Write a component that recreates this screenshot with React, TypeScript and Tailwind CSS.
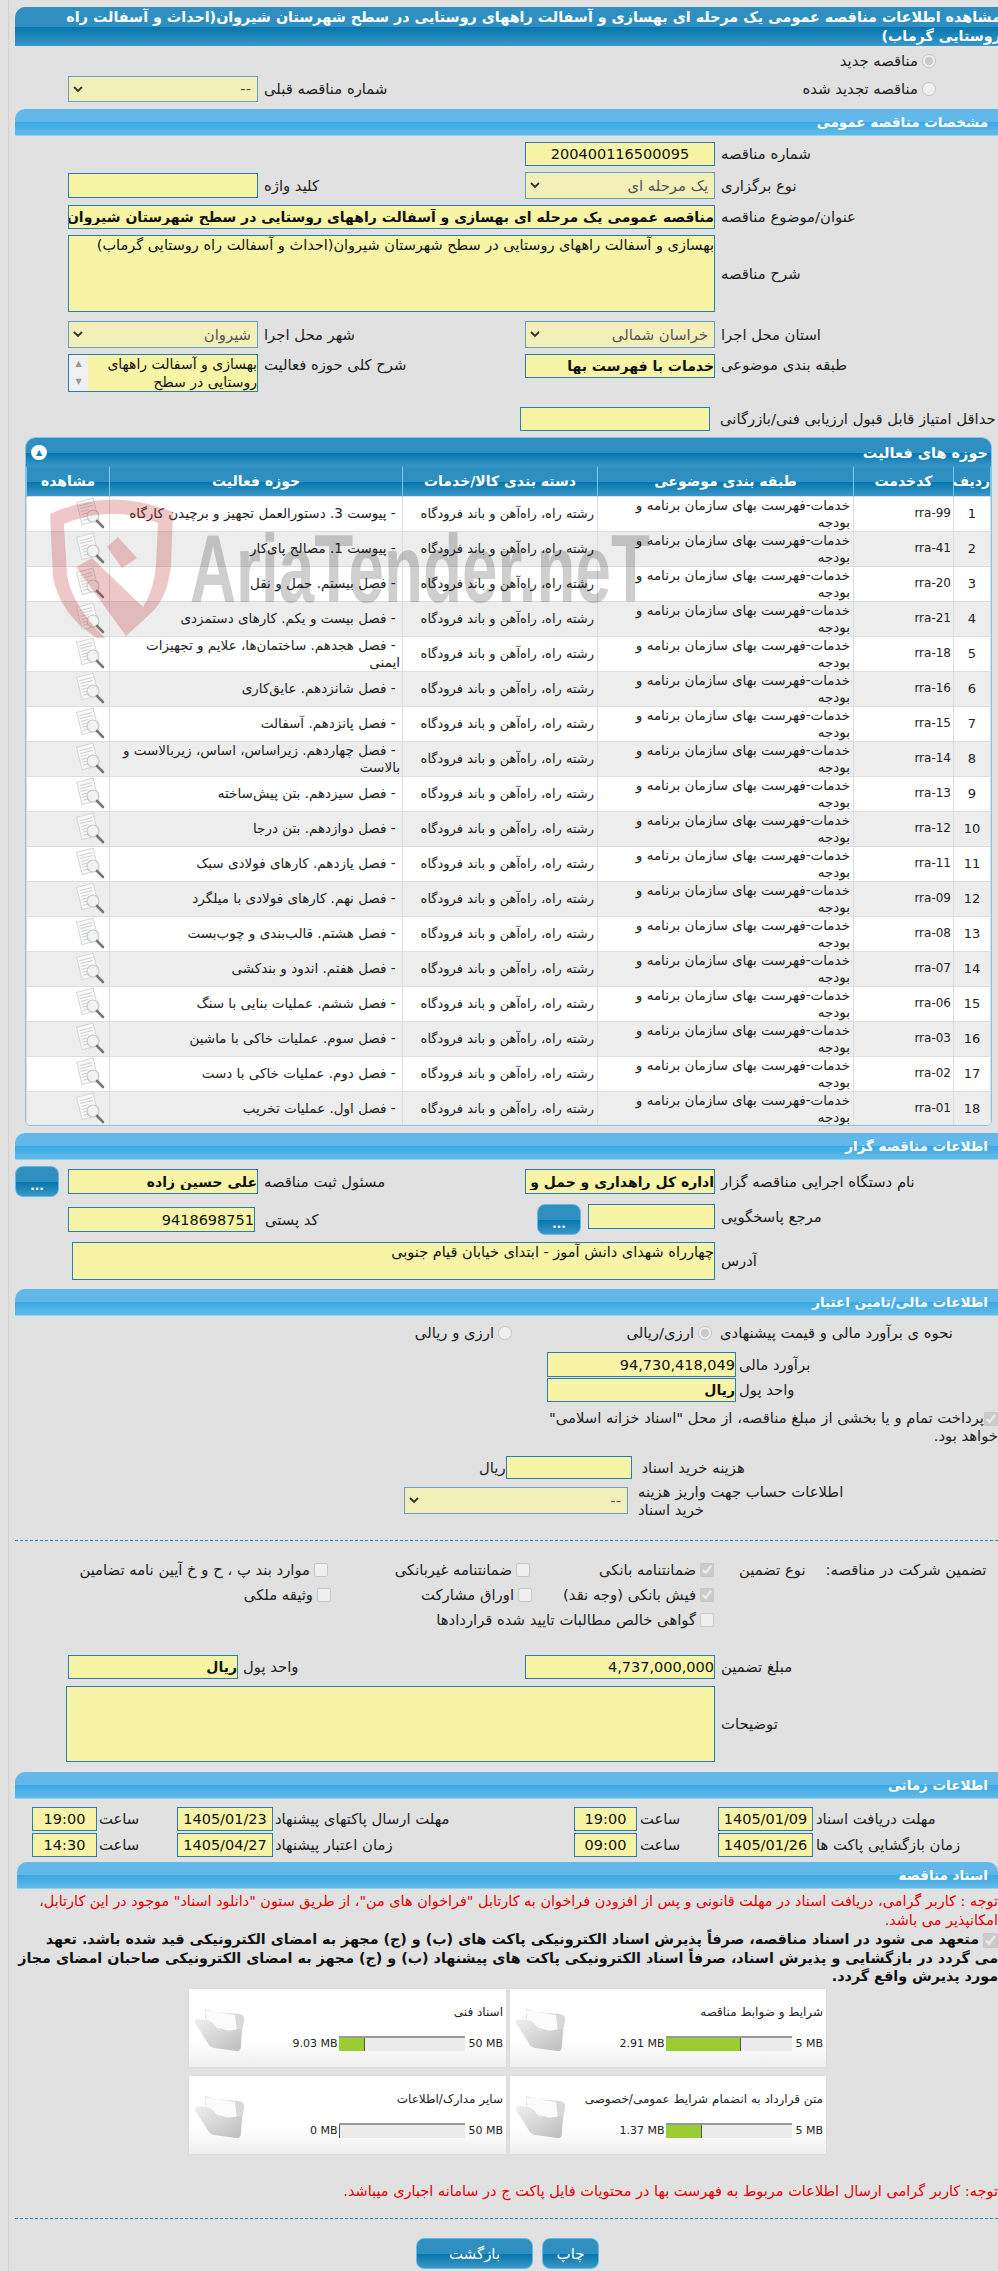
import type { ReactNode } from "react";
import { twMerge } from "tailwind-merge";

const darkBar =
  "bg-[linear-gradient(#2f8fc0_0%,#2f8fc0_50%,#0775ad_52%,#3a98c8_100%)]";
const inputBase =
  "block bg-[#f7f5a5] border border-[#2a7cb5] text-[#111] outline-none";

const rows = [
  ["rra-99", "پیوست 3. دستورالعمل تجهیز و برچیدن کارگاه"],
  ["rra-41", "پیوست 1. مصالح پای‌کار"],
  ["rra-20", "فصل بیستم. حمل و نقل"],
  ["rra-21", "فصل بیست و یکم. کارهای دستمزدی"],
  ["rra-18", "فصل هجدهم. ساختمان‌ها، علایم و تجهیزات\nایمنی"],
  ["rra-16", "فصل شانزدهم. عایق‌کاری"],
  ["rra-15", "فصل پانزدهم. آسفالت"],
  ["rra-14", "فصل چهاردهم. زیراساس، اساس، زیربالاست و\nبالاست"],
  ["rra-13", "فصل سیزدهم. بتن پیش‌ساخته"],
  ["rra-12", "فصل دوازدهم. بتن درجا"],
  ["rra-11", "فصل یازدهم. کارهای فولادی سبک"],
  ["rra-09", "فصل نهم. کارهای فولادی با میلگرد"],
  ["rra-08", "فصل هشتم. قالب‌بندی و چوب‌بست"],
  ["rra-07", "فصل هفتم. اندود و بندکشی"],
  ["rra-06", "فصل ششم. عملیات بنایی با سنگ"],
  ["rra-03", "فصل سوم. عملیات خاکی با ماشین"],
  ["rra-02", "فصل دوم. عملیات خاکی با دست"],
  ["rra-01", "فصل اول. عملیات تخریب"],
];

const Section = ({ title, className }: { title: string; className: string }) => (
  <div
    dir="rtl"
    className={`h-[27px] rounded-tl-[10px] border-b border-[#8ed4f2] bg-[linear-gradient(#62b8e8_0%,#62b8e8_48%,#3aa8e2_50%,#62bbe9_100%)] pr-[10px] text-[13.5px] leading-[26px] font-bold text-white ${className}`}
  >
    {title}
  </div>
);

const Label = ({ children, className = "" }: { children: ReactNode; className?: string }) => (
  <span dir="rtl" className={twMerge("ml-[6px] whitespace-nowrap text-left text-[#222]", className)}>
    {children}
  </span>
);

const Field = ({
  value = "",
  className,
  bold,
  center,
}: {
  value?: string;
  className: string;
  bold?: boolean;
  center?: boolean;
}) => (
  <input
    readOnly
    dir="rtl"
    value={value}
    className={`${inputBase} ${bold ? "text-[14px] font-bold" : "text-[14.5px]"} ${center ? "text-center" : ""} ${className}`}
  />
);

const Drop = ({ value, className }: { value: string; className: string }) => (
  <div className={`relative shrink-0 ${className}`}>
    <select
      disabled
      dir="rtl"
      className="block h-full w-full appearance-none border border-[#6a9fc5] bg-[#f2f0b8] pr-[6px] text-[14.8px] text-[#555] opacity-100"
    >
      <option>{value}</option>
    </select>
    <svg width="10" height="7" viewBox="0 0 10 7" className="absolute left-[5px] top-[10px]">
      <path d="M1 1l4 4 4-4" fill="none" stroke="#333" strokeWidth="1.8" />
    </svg>
  </div>
);

const Row = ({
  left,
  right,
  className,
}: {
  left?: ReactNode;
  right?: ReactNode;
  className: string;
}) => (
  <div className={`grid grid-cols-[510px_1fr] ${className}`}>
    <div className="flex items-center pl-[53px]">{left}</div>
    <div className="flex items-center">{right}</div>
  </div>
);

const Tick = ({
  label,
  checked,
  type = "checkbox",
  className,
}: {
  label: string;
  checked?: boolean;
  type?: string;
  className: string;
}) => (
  <label dir="rtl" className={`flex items-center gap-[4px] whitespace-nowrap text-[#222] ${className}`}>
    <input type={type} disabled defaultChecked={checked} className="m-0 h-[14px] w-[14px] shrink-0" />
    {label}
  </label>
);

const DotButton = ({ className }: { className: string }) => (
  <button
    className={`block shrink-0 rounded-[8px] border border-[#62bce6] ${darkBar} pt-[8px] text-[12px] font-bold text-white ${className}`}
  >
    ...
  </button>
);

const DocIcon = () => (
  <svg width="30" height="34" viewBox="0 0 30 34" className="ml-auto mr-[3px]">
    <g transform="rotate(-14 11 14)">
      <rect x="3" y="3" width="17" height="23" fill="#f9f9f9" stroke="#d6d6d6" />
      <path d="M5 7h13M5 10h13M5 13h8M5 16h6M5 19h6M5 22h9" stroke="#d2d2d2" strokeWidth="1" />
    </g>
    <circle cx="17" cy="19" r="6" fill="#eef2f2" fillOpacity="0.8" stroke="#cacaca" strokeWidth="1.2" />
    <path d="M21 24l6 6" stroke="#777" strokeWidth="2.6" strokeLinecap="round" />
  </svg>
);

const FolderIcon = () => (
  <svg width="54" height="46" viewBox="0 0 54 46" className="shrink-0">
    <defs>
      <linearGradient id="fold" x1="0" y1="0" x2="1" y2="1">
        <stop offset="0" stopColor="#efefef" />
        <stop offset="1" stopColor="#bdbdbd" />
      </linearGradient>
    </defs>
    <path d="M12 3l10 3 24 2q6 1 5 7l-4 22q-1 3-3 1L12 12z" fill="#d8d8d8" />
    <path d="M12 4l30 5 2 18-30-8z" fill="#fbfbfb" />
    <path d="M2 17q-1-3 3-4l9 1q5 1 9 7l3 3q2 2 8 1l12-2 3 0-1 16q0 7-5 6l-22-3q-5-1-7-6z" fill="url(#fold)" />
  </svg>
);

const Card = ({
  title,
  used,
  max,
  fill,
}: {
  title: string;
  used: string;
  max: string;
  fill: string;
}) => (
  <div className="flex h-[78px] gap-[2px] bg-[linear-gradient(#fff_0%,#fff_65%,#efefef_100%)] pl-[4px] pr-[3px] shadow-[0_0_2px_#d0d0d0]">
    <div className="pt-[17px]">
      <FolderIcon />
    </div>
    <div className="flex flex-1 flex-col">
      <div dir="rtl" className="mt-[14px] h-[18px] text-[12px] leading-[18px] text-[#222]">
        {title}
      </div>
      <div className="mt-[15px] flex items-center justify-end text-[11px] leading-[15px] text-[#222]">
        <span className="mr-[2px]">{used}</span>
        <div className="h-[15px] w-[126px] border-t-2 border-[#999] bg-[#ececec]">
          <div className={`h-full border-r border-[#555] bg-[#9acd32] ${fill}`} />
        </div>
        <span className="ml-[3px]">{max}</span>
      </div>
    </div>
  </div>
);

const Watermark = () => (
  <svg
    width="640"
    height="160"
    viewBox="0 0 640 160"
    className="pointer-events-none absolute left-[40px] top-[490px]"
  >
    <path
      fillRule="evenodd"
      d="M10 24Q70 -4 133 22L131 75Q128 108 110 124L86 146 36 77 52 68 103 117Q114 100 116 75L118 33Q70 14 24 34L27 85Q32 115 65 148L57 148Q20 125 13 87z"
      fill="#c23b3b"
      fillOpacity="0.28"
    />
    <path d="M78 47L97 68 82 78 67 57z" fill="#c23b3b" fillOpacity="0.28" />
    <text
      x="150"
      y="112"
      fontFamily="Liberation Sans"
      fontWeight="700"
      fontSize="96"
      textLength="460"
      lengthAdjust="spacingAndGlyphs"
      fill="#000"
      fillOpacity="0.19"
    >
      AriaTender.neT
    </text>
  </svg>
);

export default function App() {
  return (
    <div className="relative flex h-[2271px] w-[998px] overflow-hidden bg-[#e1e1e1] font-['DejaVu_Sans',sans-serif] text-[14.8px] leading-[18px]">
      <div className="w-[9px] shrink-0 border-r border-[#d0d0d0]" />
      <main className="ml-[6px] w-[983px] shrink-0 pt-[7px]">
        {/* page title */}
        <div className={`h-[39px] rounded-tl-[10px] ${darkBar} overflow-hidden`}>
          <div
            dir="rtl"
            className="-mr-[3px] whitespace-nowrap pt-[1px] text-[14.3px] leading-[18.5px] font-bold text-white"
          >
            مشاهده اطلاعات مناقصه عمومی یک مرحله ای بهسازی و آسفالت راههای روستایی در سطح شهرستان شیروان(احداث و آسفالت راه
            <br />
            روستایی گرماب)
          </div>
        </div>

        <Row
          className="h-[30px]"
          right={<Tick type="radio" checked label="مناقصه جدید" className="ml-[184px] w-[227px]" />}
        />
        <Row
          className="h-[26px]"
          left={
            <>
              <Drop value="--" className="h-[26px] w-[190px]" />
              <Label>شماره مناقصه قبلی</Label>
            </>
          }
          right={<Tick type="radio" label="مناقصه تجدید شده" className="ml-[184px] w-[227px]" />}
        />

        <Section title="مشخصات مناقصه عمومی" className="mt-[7px]" />

        <Row
          className="mt-[6px] h-[24px]"
          right={
            <>
              <Field value="200400116500095" center className="h-[24px] w-[190px]" />
              <Label>شماره مناقصه</Label>
            </>
          }
        />
        <Row
          className="mt-[6px] h-[27px]"
          left={
            <>
              <Field className="h-[25px] w-[190px]" />
              <Label>کلید واژه</Label>
            </>
          }
          right={
            <>
              <Drop value="یک مرحله ای" className="h-[27px] w-[190px]" />
              <Label>نوع برگزاری</Label>
            </>
          }
        />
        <div className="mt-[6px] flex h-[24px] items-center pl-[53px]">
          <Field
            bold
            value="مناقصه عمومی یک مرحله ای بهسازی و آسفالت راههای روستایی در سطح شهرستان شیروان(احداث و آسفالت راه روستایی گرماب)"
            className="h-[24px] w-[647px]"
          />
          <Label>عنوان/موضوع مناقصه</Label>
        </div>
        <div className="mt-[6px] flex h-[77px] items-center pl-[53px]">
          <textarea
            readOnly
            dir="rtl"
            value="بهسازی و آسفالت راههای روستایی در سطح شهرستان شیروان(احداث و آسفالت راه روستایی گرماب)"
            className={`${inputBase} h-[77px] w-[647px] resize-none text-[14.5px]`}
          />
          <Label>شرح مناقصه</Label>
        </div>
        <Row
          className="mt-[9px] h-[27px]"
          left={
            <>
              <Drop value="شیروان" className="h-[27px] w-[190px]" />
              <Label>شهر محل اجرا</Label>
            </>
          }
          right={
            <>
              <Drop value="خراسان شمالی" className="h-[27px] w-[190px]" />
              <Label>استان محل اجرا</Label>
            </>
          }
        />
        <div className="mt-[6px] grid h-[38px] grid-cols-[510px_1fr]">
          <div className="flex items-start pl-[53px]">
            <div className="flex h-[38px] w-[190px] border border-[#2a7cb5] bg-[#f7f5a5]">
              <div className="flex w-[19px] shrink-0 flex-col items-center justify-between bg-[#f0f0f0] py-[3px] text-[8px] leading-[12px] text-[#999]">
                <span>▲</span>
                <span>▼</span>
              </div>
              <div dir="rtl" className="flex-1 text-[14px] leading-[18px] text-[#111]">
                بهسازی و آسفالت راههای
                <br />
                روستایی در سطح
              </div>
            </div>
            <Label className="leading-[22px]">شرح کلی حوزه فعالیت</Label>
          </div>
          <div className="flex items-start">
            <Field bold value="خدمات با فهرست بها" className="h-[24px] w-[190px]" />
            <Label className="leading-[22px]">طبقه بندی موضوعی</Label>
          </div>
        </div>
        <div className="mt-[15px] flex h-[24px] items-center pl-[505px]">
          <Field className="h-[24px] w-[190px]" />
          <Label className="ml-[10px]">حداقل امتیاز قابل قبول ارزیابی فنی/بازرگانی</Label>
        </div>

        {/* activity table */}
        <div className="ml-[10px] mt-[6px] h-[689px] w-[967px] overflow-hidden rounded-t-[10px] rounded-b-[6px] border border-[#8ac4e4]">
          <div className={`relative flex h-[29px] items-center justify-between pl-[5px] pr-[3px] ${darkBar}`}>
            <span className="flex h-[15px] w-[16px] items-center justify-center rounded-full bg-white text-[8px] text-[#1c80b4]">
              ▲
            </span>
            <span dir="rtl" className="text-[14.5px] font-bold text-white">
              حوزه های فعالیت
            </span>
          </div>
          <table dir="rtl" className="w-full table-fixed border-collapse bg-white text-[13.5px] leading-[17px] text-[#222]">
            <colgroup>
              <col className="w-[37px]" />
              <col className="w-[100px]" />
              <col className="w-[256px]" />
              <col className="w-[195px]" />
              <col className="w-[293px]" />
              <col />
            </colgroup>
            <thead>
              <tr className={`h-[29px] ${darkBar} text-[14px] font-bold text-white`}>
                {["ردیف", "کدخدمت", "طبقه بندی موضوعی", "دسته بندی کالا/خدمات", "حوزه فعالیت", "مشاهده"].map((h) => (
                  <th key={h} className="border-x border-[#7cc4ea] p-0 text-center font-bold">
                    {h}
                  </th>
                ))}
              </tr>
            </thead>
            <tbody>
              {rows.map((r, i) => (
                <tr key={r[0]} className={`h-[35px] ${i % 2 ? "bg-[#ededed]" : "bg-white"}`}>
                  <td className="border border-[#dcdcdc] p-0 text-center text-[13px]">{i + 1}</td>
                  <td className="border border-[#dcdcdc] p-0 pr-[2px] text-right text-[12px]">
                    <span dir="ltr">{r[0]}</span>
                  </td>
                  <td className="border border-[#dcdcdc] p-0 pr-[3px]">
                    خدمات-فهرست بهای سازمان برنامه و
                    <br />
                    بودجه
                  </td>
                  <td className="border border-[#dcdcdc] p-0 pr-[3px] text-[13px]">رشته راه، راه‌آهن و باند فرودگاه</td>
                  <td className="border border-[#dcdcdc] p-0 pr-[2px] whitespace-pre-line">
                    {"\u00a0- " + r[1]}
                  </td>
                  <td className="border border-[#dcdcdc] p-0">
                    <DocIcon />
                  </td>
                </tr>
              ))}
            </tbody>
          </table>
        </div>

        <Section title="اطلاعات مناقصه گزار" className="mt-[7px]" />

        <div className="mt-[6px] grid h-[31px] grid-cols-[510px_1fr]">
          <div className="flex items-center">
            <DotButton className="h-[31px] w-[44px]" />
            <Field bold value="علی حسین زاده" className="ml-[9px] h-[25px] w-[190px]" />
            <Label>مسئول ثبت مناقصه</Label>
          </div>
          <div className="flex items-center">
            <Field bold value="اداره کل راهداری و حمل و نقل جاده ای خراسان شمالی" className="h-[25px] w-[190px]" />
            <Label>نام دستگاه اجرایی مناقصه گزار</Label>
          </div>
        </div>
        <div className="mt-[7px] grid h-[31px] grid-cols-[510px_1fr]">
          <div className="flex items-center pl-[53px]">
            <Field value="9418698751" className="h-[25px] w-[187px]" />
            <Label className="ml-[10px]">کد پستی</Label>
          </div>
          <div className="flex items-start pl-[12px]">
            <DotButton className="h-[31px] w-[44px]" />
            <Field className="ml-[7px] h-[25px] w-[127px]" />
            <Label className="leading-[26px]">مرجع پاسخگویی</Label>
          </div>
        </div>
        <div className="mt-[7px] flex h-[38px] items-center pl-[57px]">
          <textarea
            readOnly
            dir="rtl"
            value="چهارراه شهدای دانش آموز - ابتدای خیابان قیام جنوبی"
            className={`${inputBase} h-[38px] w-[643px] resize-none text-[14.5px]`}
          />
          <Label>آدرس</Label>
        </div>

        <Section title="اطلاعات مالی/تامین اعتبار" className="mt-[9px]" />

        <div className="mt-[4px] flex h-[25px] items-center pl-[385px]">
          <Tick type="radio" label="ارزی و ریالی" className="w-[112px]" />
          <Tick type="radio" checked label="ارزی/ریالی" className="ml-[88px] w-[112px]" />
          <Label className="ml-[8px]">نحوه ی برآورد مالی و قیمت پیشنهادی</Label>
        </div>
        <div className="mt-[7px] flex h-[25px] items-center pl-[532px]">
          <Field value="94,730,418,049" className="h-[25px] w-[189px]" />
          <Label className="ml-[3px]">برآورد مالی</Label>
        </div>
        <div className="mt-[1px] flex h-[24px] items-center pl-[532px]">
          <Field bold value="ریال" className="h-[24px] w-[189px]" />
          <Label className="ml-[3px]">واحد پول</Label>
        </div>
        <div dir="rtl" className="mt-[7px] h-[40px] whitespace-nowrap text-[#222]">
          <input type="checkbox" disabled defaultChecked className="m-0 h-[14px] w-[14px] align-middle" />
          پرداخت تمام و یا بخشی از مبلغ مناقصه، از محل "اسناد خزانه اسلامی"
          <br />
          خواهد بود.
        </div>
        <div className="mt-[7px] flex h-[23px] items-center pl-[464px]">
          <span dir="rtl" className="text-[#222]">ریال</span>
          <Field className="h-[23px] w-[126px]" />
          <Label className="ml-[10px]">هزینه خرید اسناد</Label>
        </div>
        <div className="mt-[8px] flex h-[27px] items-center pl-[389px]">
          <Drop value="--" className="h-[27px] w-[224px]" />
          <Label className="ml-[10px]">
            اطلاعات حساب جهت واریز هزینه
            <br />
            خرید اسناد
          </Label>
        </div>
        <div className="mt-[26px] border-t border-dashed border-[#2a8bc0]" />

        <div className="mt-[17px] flex h-[24px] items-center pl-[45px]">
          <Tick label="موارد بند پ ، ح و خ آیین نامه تضامین" className="w-[268px]" />
          <Tick label="ضمانتنامه غیربانکی" className="ml-[12px] w-[190px]" />
          <Tick checked label="ضمانتنامه بانکی" className="ml-[10px] w-[174px]" />
          <Label className="ml-[25px]">نوع تضمین</Label>
          <Label className="ml-[20px]">تضمین شرکت در مناقصه:</Label>
        </div>
        <div className="mt-[1px] flex h-[24px] items-center pl-[45px]">
          <Tick label="وثیقه ملکی" className="w-[271px]" />
          <Tick label="اوراق مشارکت" className="ml-[9px] w-[192px]" />
          <Tick checked label="فیش بانکی (وجه نقد)" className="ml-[8px] w-[174px]" />
        </div>
        <div className="mt-[1px] flex h-[24px] items-center pl-[525px]">
          <Tick label="گواهی خالص مطالبات تایید شده قراردادها" className="w-[174px]" />
        </div>

        <Row
          className="mt-[23px] h-[24px]"
          left={
            <>
              <Field bold value="ریال" className="h-[24px] w-[170px]" />
              <Label className="ml-[5px]">واحد پول</Label>
            </>
          }
          right={
            <>
              <Field value="4,737,000,000" className="h-[24px] w-[190px]" />
              <Label>مبلغ تضمین</Label>
            </>
          }
        />
        <div className="mt-[7px] flex h-[76px] items-center pl-[51px]">
          <textarea readOnly dir="rtl" className={`${inputBase} h-[76px] w-[649px] resize-none`} />
          <Label>توضیحات</Label>
        </div>

        <Section title="اطلاعات زمانی" className="mt-[10px]" />

        {[
          ["19:00", "1405/01/23", "مهلت ارسال پاکتهای پیشنهاد", "19:00", "1405/01/09", "مهلت دریافت اسناد"],
          ["14:30", "1405/04/27", "زمان اعتبار پیشنهاد", "09:00", "1405/01/26", "زمان بازگشایی پاکت ها"],
        ].map((t, i) => (
          <div key={t[1]} className={`flex h-[24px] items-center pl-[17px] ${i ? "mt-[2px]" : "mt-[8px]"}`}>
            <Field center value={t[0]} className="h-[24px] w-[65px]" />
            <Label className="ml-[2px] w-[78px]">ساعت</Label>
            <Field center value={t[1]} className="h-[24px] w-[96px]" />
            <Label className="ml-[2px] w-[299px]">{t[2]}</Label>
            <Field center value={t[3]} className="h-[24px] w-[63px]" />
            <Label className="ml-[3px] w-[78px]">ساعت</Label>
            <Field center value={t[4]} className="h-[24px] w-[95px]" />
            <Label className="ml-[3px]">{t[5]}</Label>
          </div>
        ))}

        <Section title="اسناد مناقصه" className="ml-[2px] mt-[5px] rounded-tr-[10px]" />

        <p dir="rtl" className="mt-[3px] h-[38px] whitespace-nowrap text-[14.4px] leading-[19px] text-[#e60000]">
          توجه : کاربر گرامی، دریافت اسناد در مهلت قانونی و پس از افزودن فراخوان به کارتابل "فراخوان های من"، از طریق ستون "دانلود اسناد" موجود در این کارتابل،
          <br />
          امکانپذیر می باشد.
        </p>
        <div dir="rtl" className="h-[59px] whitespace-nowrap text-[14.3px] leading-[18.5px] font-bold text-[#111]">
          <input type="checkbox" disabled defaultChecked className="m-0 ml-[4px] h-[15px] w-[15px] align-middle" />
          متعهد می شود در اسناد مناقصه، صرفاً پذیرش اسناد الکترونیکی پاکت های (ب) و (ج) مجهز به امضای الکترونیکی قید شده باشد. تعهد
          <br />
          می گردد در بازگشایی و پذیرش اسناد، صرفاً اسناد الکترونیکی پاکت های پیشنهاد (ب) و (ج) مجهز به امضای الکترونیکی صاحبان امضای مجاز
          <br />
          مورد پذیرش واقع گردد.
        </div>

        <div className="ml-[174px] grid w-[637px] grid-cols-[317px_316px] gap-x-[4px] gap-y-[9px]">
          <Card title="اسناد فنی" used="9.03 MB" max="50 MB" fill="w-[26px]" />
          <Card title="شرایط و ضوابط مناقصه" used="2.91 MB" max="5 MB" fill="w-[75px]" />
          <Card title="سایر مدارک/اطلاعات" used="0 MB" max="50 MB" fill="w-[1px]" />
          <Card title="متن قرارداد به انضمام شرایط عمومی/خصوصی" used="1.37 MB" max="5 MB" fill="w-[36px]" />
        </div>

        <p dir="rtl" className="mt-[27px] h-[20px] whitespace-nowrap text-[14.5px] leading-[20px] text-[#e60000]">
          توجه: کاربر گرامی ارسال اطلاعات مربوط به فهرست بها در محتویات فایل پاکت ج در سامانه اجباری میباشد.
        </p>
        <div className="mt-[17px] border-t border-dashed border-[#2a8bc0]" />

        <div className="mt-[19px] flex gap-[9px] pl-[401px]">
          <button className={`h-[31px] w-[117px] rounded-[8px] border border-[#62bce6] ${darkBar} text-[15px] text-white`}>
            بازگشت
          </button>
          <button className={`h-[31px] w-[57px] rounded-[8px] border border-[#62bce6] ${darkBar} text-[15px] text-white`}>
            چاپ
          </button>
        </div>
      </main>
      <Watermark />
    </div>
  );
}
